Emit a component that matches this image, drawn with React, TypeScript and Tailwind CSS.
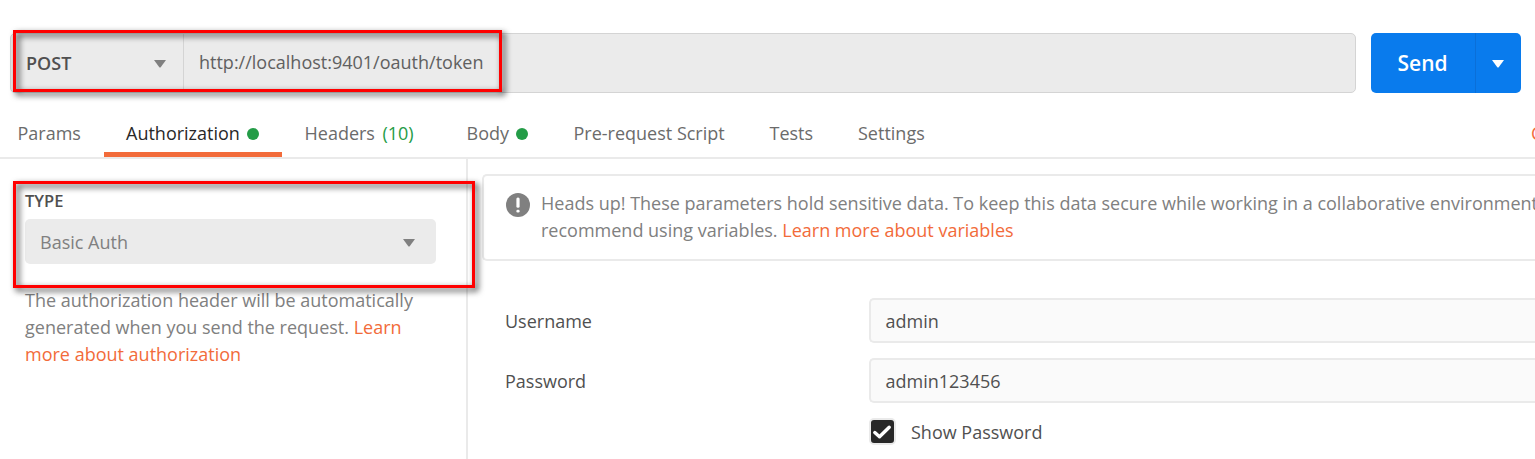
import type { ReactNode } from "react";

function Caret({ className }: { className: string }) {
  return (
    <svg width="12" height="8" viewBox="0 0 12 8" className={className} fill="currentColor">
      <path d="M0 0h12L6.7 7.2c-.4.4-1 .4-1.4 0z" />
    </svg>
  );
}

function Tab({ className, active, children }: { className: string; active?: boolean; children: ReactNode }) {
  return (
    <div className={`flex h-full shrink-0 flex-col whitespace-nowrap ${active ? "text-[#282828]" : "text-[#6b6b6b]"} ${className}`}>
      <div className="-mb-1 flex h-[41px] shrink-0 items-center pl-[22.5px]">{children}</div>
      {active && <div className="mt-auto h-[5px] bg-[#f26b3a]" />}
    </div>
  );
}

function Dot() {
  return <span className="ml-[7px] size-3 rounded-full bg-[#249c47]" />;
}

function Field({ label, value }: { label: string; value: string }) {
  return (
    <div className="mb-[15px] flex h-[45px] items-center">
      <label className="w-[364px] shrink-0 pt-px text-[#505050]">{label}</label>
      <div className="flex h-full flex-1 items-center rounded-l-[5px] border-2 border-r-0 border-[#eaeaea] bg-[#fafafa] pt-px pl-[14.5px] text-[#505050]">
        {value}
      </div>
    </div>
  );
}

export default function App() {
  return (
    <div className="relative flex h-[459px] w-[1535px] flex-col overflow-hidden bg-white font-['Open_Sans',sans-serif] text-[18px] leading-[27px]">
      <div className="flex h-[93px] shrink-0 pt-[33px] pl-[10px]">
        <div className="flex w-[1346px] rounded-[5px] border border-[#d4d4d4] bg-[#ebebeb] text-[#505050]">
          <div className="flex w-[173px] items-center justify-between border-r border-[#d4d4d4] pr-[17px] pl-[15px]">
            <span className="font-semibold">POST</span>
            <Caret className="mt-0.5 text-[#808080]" />
          </div>
          <div className="flex items-center pl-[15px] text-[#606060]">
            <span className="-mt-0.5">http://localhost:9401/oauth/token</span>
          </div>
        </div>
        <div className="ml-[15px] flex w-[150px] overflow-hidden rounded-[5px] bg-[#097bed] text-white">
          <div className="flex w-[105px] items-center border-r border-[#0a6fd8] pl-[26.5px] text-[21px] font-semibold">Send</div>
          <div className="flex flex-1 items-center justify-center">
            <Caret className="mt-0.5 mr-px" />
          </div>
        </div>
      </div>

      <div className="flex h-[66px] shrink-0 border-b-2 border-[#eaeaea] pt-5">
        <Tab className="-ml-[5px] w-[109px]">Params</Tab>
        <Tab className="w-[178px]" active>
          <span className="-ml-[0.5px]">Authorization</span>
          <Dot />
        </Tab>
        <Tab className="w-[162px]">
          Headers<span className="ml-[7.5px] text-[#249c47]">(10)</span>
        </Tab>
        <Tab className="w-[107px]">Body<Dot /></Tab>
        <Tab className="w-[196px]">Pre-request Script</Tab>
        <Tab className="w-[88.5px]">Tests</Tab>
        <Tab className="w-[695.5px]">Settings</Tab>
        <span className="flex h-[41px] shrink-0 items-center text-[#f26b3a]">Cookies</span>
      </div>

      <div className="flex flex-1">
        <aside className="w-[468px] shrink-0 border-r-2 border-[#eaeaea] pt-[30px] pl-[25px]">
          <div className="text-[16.5px] leading-6 font-semibold text-[#505050]">TYPE</div>
          <div className="mt-[6px] flex h-[45px] w-[411px] items-center justify-between rounded-[5px] bg-[#ebebeb] pt-px pr-[21px] pl-[15px] text-[#808080]">
            <span>Basic Auth</span>
            <Caret className="mt-px text-[#808080]" />
          </div>
          <p className="mt-[23px] w-[400px] text-[#808080]">
            The authorization header will be automatically generated when you send the request.{" "}
            <a className="text-[#f26b3a]">Learn more about authorization</a>
          </p>
        </aside>
        <main className="w-[1067px] pt-[15px]">
          <div className="ml-[14px] flex h-[87px] rounded-l-[5px] border-2 border-r-0 border-[#eaeaea] pt-[14px] pl-[22px]">
            <svg width="24" height="24" viewBox="0 0 24 24" className="mt-[3px] mr-[11px] shrink-0">
              <circle cx="12" cy="12" r="12" fill="#808080" />
              <rect x="10.4" y="4.4" width="3.2" height="10.4" rx="1.5" fill="#fff" />
              <rect x="10.4" y="16.8" width="3.2" height="2.8" rx="1.3" fill="#fff" />
            </svg>
            <div className="whitespace-nowrap text-[#808080]">
              Heads up! These parameters hold sensitive data. To keep this data secure while working in a collaborative environment, we
              <br />
              recommend using variables. <a className="text-[#f26b3a]">Learn more about variables</a>
            </div>
          </div>
          <div className="mt-[37px] pl-[37px]">
            <Field label="Username" value="admin" />
            <Field label="Password" value="admin123456" />
            <div className="flex h-[27px] items-center pl-[364px] text-[#505050]">
              <span className="flex size-[27px] items-center justify-center rounded-[5px] border-2 border-[#eaeaea] bg-[#282828]">
                <svg width="23" height="23" viewBox="0 0 23 23" fill="none" stroke="#fff" strokeWidth="3.4" strokeLinecap="round" strokeLinejoin="round">
                  <path d="M3.8 12.6 8.5 16.8 18.2 7.2" />
                </svg>
              </span>
              <span className="mt-0.5 ml-[15px]">Show Password</span>
            </div>
          </div>
        </main>
      </div>

      <div className="absolute top-[30px] left-[13px] h-[62px] w-[489px] border-3 border-[#ff0000] drop-shadow-[3px_3px_3px_rgba(0,0,0,0.8)]" />
      <div className="absolute top-[181px] left-[13px] h-[107px] w-[462px] border-3 border-[#ff0000] drop-shadow-[3px_3px_3px_rgba(0,0,0,0.8)]" />
    </div>
  );
}
